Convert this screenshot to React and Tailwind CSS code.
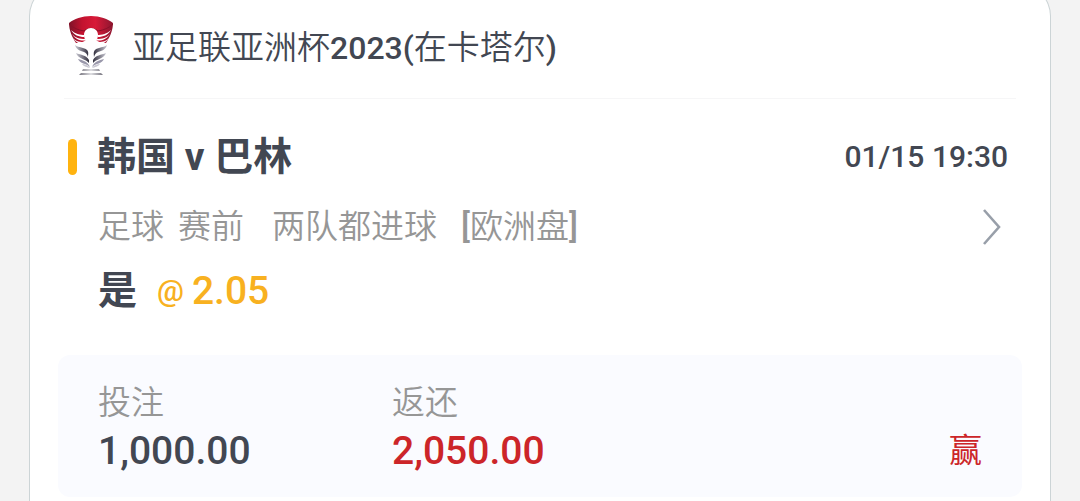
import React from 'react';

const bet = {
  match: '韩国 v 巴林',
  time: '01/15 19:30',
  sport: '足球',
  phase: '赛前',
  market: '两队都进球',
  oddsType: '欧洲盘',
  pick: '是',
  odds: '2.05',
  stake: '1,000.00',
  payout: '2,050.00',
  result: '赢',
};

// one side of the trophy, mirrored for the other
function Wing() {
  return (
    <g>
      <path d="M3 14c4 4 9 5 14 5l-1 2C11 21 6 19 3 14z" fill="#fff" />
      <path d="M4 18c3 4 8 5 13 5l0 1.500C12 25 7 23 4 18z" fill="#fff" />
      <path d="M5 22c3 4 8 4 12 4l0 2C12 28 8 27 5 22z" fill="#fff" />
      <path d="M7 29c4 3 9 2 12 5 2 2 1 5 1 7-1-3-2-4-4-5-4-1-8-3-9-7z" fill="url(#silver)" />
      <path d="M8 37c5 2 10 2 13 7l0 3c-3-4-11-4-13-10z" fill="url(#silver)" />
      <path d="M10 43c5 1 10 3 12 8-4-4-10-3-12-8z" fill="#9a98ab" />
      <path d="M14 48c3 0 6 1 8 4-3-1-6-1-8-4z" fill="#c9c8d2" />
    </g>
  );
}

function TrophyLogo() {
  return (
    <svg className="h-[60px] w-[46px] shrink-0" viewBox="0 0 46 60" aria-hidden="true">
      <defs>
        <linearGradient id="cup" x1="0" x2="1" y1="0" y2="0">
          <stop offset="0" stopColor="#7d1329" />
          <stop offset="0.3" stopColor="#c3122f" />
          <stop offset="0.6" stopColor="#d81a38" />
          <stop offset="1" stopColor="#8c1630" />
        </linearGradient>
        <linearGradient id="silver" x1="0" x2="1" y1="0" y2="0">
          <stop offset="0" stopColor="#c9c8d2" />
          <stop offset="1" stopColor="#33313f" />
        </linearGradient>
        <linearGradient id="base" x1="0" x2="1" y1="0" y2="0">
          <stop offset="0" stopColor="#77757f" />
          <stop offset="0.5" stopColor="#dedee2" />
          <stop offset="1" stopColor="#77757f" />
        </linearGradient>
      </defs>
      <path d="M1 7C6 3 14 0 23 0s17 3 22 7c0 7-3 14-7 20-4 0-8-1-10-3l-5-6-5 6c-2 2-6 3-10 3C4 21 1 14 1 7z" fill="url(#cup)" />
      <path d="M1 8c4 4 9 6 15 7 3-3 11-3 14 0 6-1 11-3 15-7" fill="none" stroke="#8a1029" strokeWidth="1" />
      <Wing />
      <g transform="translate(46 0) scale(-1 1)">
        <Wing />
      </g>
      <path d="M23 12c4 0 7 3 7 7 0 5-4 9-5 15l-2 14-2-14c-1-6-5-10-5-15 0-4 3-7 7-7z" fill="#fff" />
      <path d="M15 53h16l1 2H14zM13 57h20l2 2H11z" fill="url(#base)" />
    </svg>
  );
}

function App() {
  return (
    <div className="min-h-screen overflow-hidden bg-[#f3f3f3] px-[29px] font-['Roboto','Noto_Sans_CJK_SC',sans-serif] text-[#424752]">
      <main className="-mt-4 rounded-t-[32px] border border-b-0 border-[#ccd4d6] bg-white px-7 pt-4 pb-1">
        <header className="mx-1.5 flex h-[98px] items-center gap-[18px] border-b border-[#f6f6f7] px-1 pb-2">
          <TrophyLogo />
          <h1 className="pt-1 text-[33px] leading-[48px] font-[350]">
            亚足联亚洲杯<span className="text-[32px] font-medium">2023(</span>在卡塔尔<span className="text-[32px] font-medium">)</span>
          </h1>
        </header>

        <section className="pt-[30px] pr-3.5 pl-2.5">
          <div className="flex items-center">
            <span className="h-9 w-[9px] rounded-full bg-[#ffb30f]" />
            <h2 className="ml-5 flex-1 text-[39px] leading-[56px] font-bold">{bet.match}</h2>
            <time className="text-[30px] leading-[56px] font-medium">{bet.time}</time>
          </div>

          <div className="mt-[18px] flex items-center pl-[30px] text-[33px] leading-[48px] font-[350] text-[#969696]">
            <span>{bet.sport}</span>
            <span className="ml-3.5">{bet.phase}</span>
            <span className="ml-7">{bet.market}</span>
            <span className="ml-6">
              <span className="font-medium">[</span>{bet.oddsType}<span className="font-medium">]</span>
            </span>
            <button type="button" aria-label="详情" className="ml-auto pr-1.5">
              <svg className="h-9 w-5" viewBox="0 0 20 36" fill="none" stroke="#989fa9" strokeWidth="2.6">
                <path d="M2 1l15 17L2 35" />
              </svg>
            </button>
          </div>

          <div className="mt-3 flex items-center gap-5 pl-[30px] text-[39px] leading-[56px]">
            <strong className="font-bold">{bet.pick}</strong>
            <span className="flex items-center gap-2 font-medium text-[#f8b120]">
              <span className="text-[30px]">@</span>
              <span>{bet.odds}</span>
            </span>
          </div>
        </section>

        <section className="mt-9 flex items-end rounded-xl bg-[#fafbff] px-10 pt-6 pb-[22px]">
          <dl className="flex flex-1">
            <div className="w-[294px]">
              <dt className="text-[33px] leading-[48px] font-[350] text-[#969696]">投注</dt>
              <dd className="text-[39px] leading-[48px] font-medium">{bet.stake}</dd>
            </div>
            <div>
              <dt className="text-[33px] leading-[48px] font-[350] text-[#969696]">返还</dt>
              <dd className="text-[39px] leading-[48px] font-medium text-[#cc2529]">{bet.payout}</dd>
            </div>
          </dl>
          <span className="text-[33px] leading-[48px] text-[#cc2529]">{bet.result}</span>
        </section>
      </main>
    </div>
  );
}

export default App;
